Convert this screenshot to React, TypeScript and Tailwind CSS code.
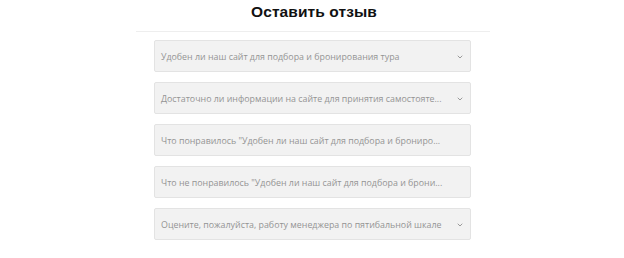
import { ChevronDown } from "lucide-react";

const fields = [
  { text: "Удобен ли наш сайт для подбора и бронирования тура", select: true },
  { text: "Достаточно ли информации на сайте для принятия самостояте...", select: true },
  { text: "Что понравилось \"Удобен ли наш сайт для подбора и брониро...", select: false },
  { text: "Что не понравилось \"Удобен ли наш сайт для подбора и брони...", select: false },
  { text: "Оцените, пожалуйста, работу менеджера по пятибальной шкале", select: true },
];

export default function App() {
  return (
    <div className="w-[624px] h-[258px] bg-white flex flex-col items-center">
      <div className="w-[354px] ml-[2px] border-b border-[#eeeeee] h-[32px] flex justify-center">
        <h2 className="mt-[1px] ml-[2px] text-[15.5px] leading-[22px] font-bold text-[#111] font-['Liberation_Sans',Arial,sans-serif] tracking-[0.1px]">
          Оставить отзыв
        </h2>
      </div>
      <div className="mt-[8px] ml-[1px] w-[317px] flex flex-col gap-[10px]">
        {fields.map((f, i) => (
          <div
            key={i}
            className="h-[32px] bg-[#f2f2f2] border border-[#e3e3e3] rounded-[2px] flex items-center pl-[6px] pr-[6px]"
          >
            <span className="translate-y-[2px] text-[8.85px] text-[#949494] font-['Open_Sans',sans-serif] whitespace-nowrap">
              {f.text}
            </span>
            {f.select && (
              <ChevronDown className="ml-auto translate-y-[1px] w-[8px] h-[8px] text-[#888]" strokeWidth={2.5} />
            )}
          </div>
        ))}
      </div>
    </div>
  );
}
